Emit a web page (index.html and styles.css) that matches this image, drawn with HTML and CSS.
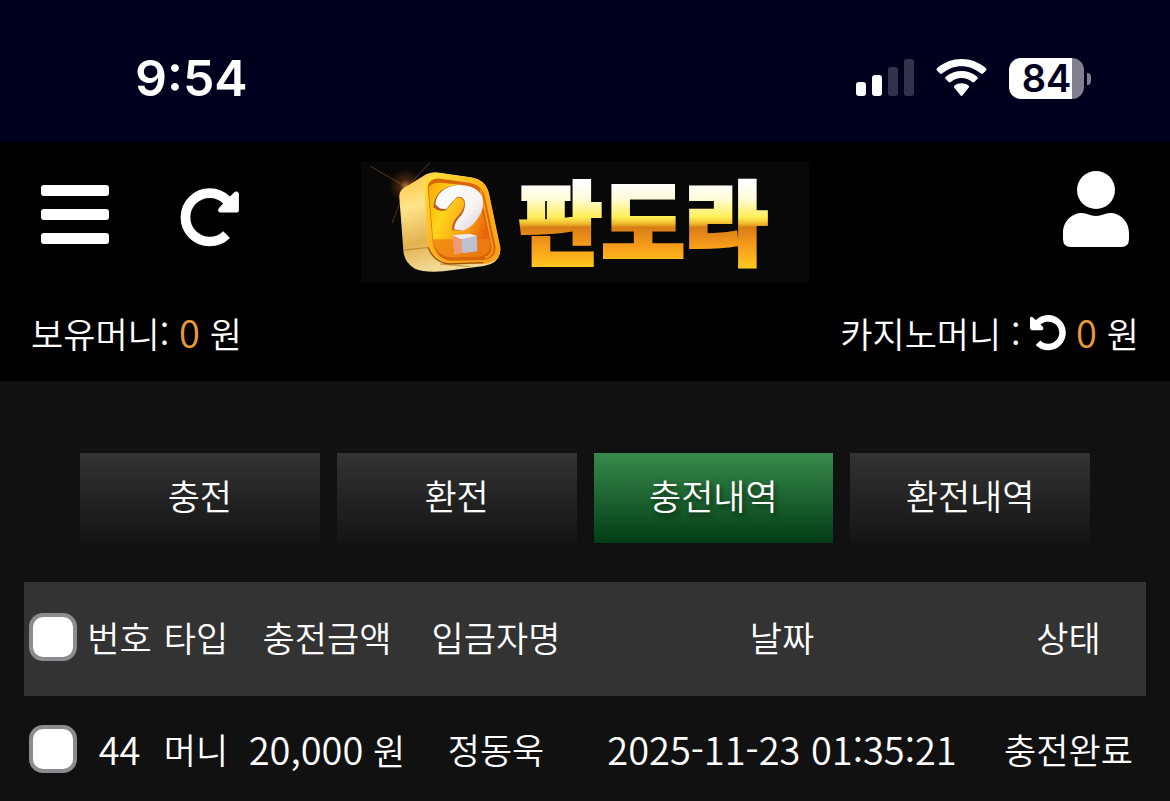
FILE: index.html
```html
<!DOCTYPE html>
<html lang="ko">
<head>
<meta charset="utf-8">
<meta name="viewport" content="width=device-width, initial-scale=1">
<title>충전내역</title>
<link rel="stylesheet" href="styles.css">
</head>
<body>
<div class="status">
  <time class="clock">9:54</time>
  <div class="indicators">
    <svg class="signal" width="58" height="38" viewBox="0 0 58 38" aria-hidden="true">
      <rect x="0" y="23" width="10" height="14" rx="3" fill="#fff"/>
      <rect x="16" y="16" width="10" height="21" rx="3" fill="#fff"/>
      <rect x="32" y="8" width="10" height="29" rx="3" fill="#34324b"/>
      <rect x="48" y="0" width="10" height="37" rx="3" fill="#34324b"/>
    </svg>
    <svg class="wifi" width="51" height="38" viewBox="0 0 51 38" aria-hidden="true" fill="#fff">
      <path d="M1 11.5Q-.2 10.400 1 9.300C15-3.100 36-3.100 50 9.300Q51.200 10.400 50 11.500L47 14.500Q46 15.400 45 14.600C33.500 4.700 17.500 4.700 6 14.600Q5 15.400 4 14.500Z"/>
      <path d="M9.500 19.700Q8.600 18.700 9.700 17.700C18.500 10 32.500 10 41.300 17.700Q42.400 18.700 41.500 19.700L38.300 23Q37.300 23.900 36.200 23C30 17.600 21 17.600 14.800 23Q13.700 23.900 12.700 23Z"/>
      <path d="M18.200 28.500Q17.300 27.500 18.500 26.600C22.500 23.500 28.500 23.500 32.500 26.600Q33.700 27.500 32.800 28.500L26.600 36.300Q25.500 37.500 24.400 36.300Z"/>
    </svg>
    <span class="battery"><span class="level">84</span></span>
  </div>
</div>

<header class="header">
  <div class="bar">
    <div class="tools">
      <button class="icon menu" type="button" aria-label="메뉴">
        <svg width="68" height="60" viewBox="0 0 68 60" fill="#fff">
          <rect width="68" height="11" rx="3"/><rect y="24" width="68" height="11" rx="3"/><rect y="48" width="68" height="11" rx="3"/>
        </svg>
      </button>
      <button class="icon reload" type="button" aria-label="새로고침">
        <svg width="59" height="60" viewBox="0 0 59 60">
          <path d="M45.800 12.200A24.200 24.200 0 1 0 45.600 46.600" fill="none" stroke="#fff" stroke-width="9.700"/>
          <path d="M42.500 15L49 8.500 53 4.500Q54.500 3.300 56 3.500 57.900 4 57.900 6V22.500Q57.900 24.500 56 24.500H39.500Q37.500 24.500 37 22.500 37 21 38 20Z" fill="#fff"/>
        </svg>
      </button>
    </div>
    <a class="logo" href="#" aria-label="판도라">
      <svg width="448" height="120" viewBox="0 0 448 120">
        <defs>
          <linearGradient id="gold" gradientUnits="userSpaceOnUse" x1="0" y1="20" x2="0" y2="104">
            <stop offset="0" stop-color="#fff"/><stop offset=".2" stop-color="#fffbd8"/><stop offset=".42" stop-color="#ffee55"/><stop offset=".5" stop-color="#eeb72a"/><stop offset=".54" stop-color="#d87d16"/><stop offset=".75" stop-color="#f59a1a"/><stop offset="1" stop-color="#ffc51e"/>
          </linearGradient>
          <linearGradient id="side" x1="0" y1="0" x2=".3" y2="1">
            <stop offset="0" stop-color="#ffc43a"/><stop offset=".35" stop-color="#ffe38a"/><stop offset=".7" stop-color="#e2b350"/><stop offset="1" stop-color="#f3dc9a"/>
          </linearGradient>
          <linearGradient id="rim" x1="0" y1="0" x2="1" y2="1">
            <stop offset="0" stop-color="#ffe43a"/><stop offset=".45" stop-color="#ffb21c"/><stop offset="1" stop-color="#f5a01c"/>
          </linearGradient>
          <linearGradient id="face" x1="0" y1="0" x2="1" y2=".5">
            <stop offset="0" stop-color="#f9a800"/><stop offset=".35" stop-color="#ffd51c"/><stop offset=".75" stop-color="#f99a12"/><stop offset="1" stop-color="#e9650c"/>
          </linearGradient>
          <linearGradient id="mark" x1="0" y1="0" x2="1" y2="1">
            <stop offset="0" stop-color="#fff"/><stop offset=".65" stop-color="#f6f2f2"/><stop offset="1" stop-color="#cfcbd2"/>
          </linearGradient>
          <radialGradient id="flare"><stop offset="0" stop-color="#ffb060" stop-opacity=".7"/><stop offset=".4" stop-color="#a04c14" stop-opacity=".4"/><stop offset="1" stop-color="#a04c14" stop-opacity="0"/></radialGradient>
        </defs>
        <g transform="scale(.3333) translate(-3 -6)">
          <circle cx="138" cy="78" r="50" fill="url(#flare)"/>
          <path d="M30 18L140 82M210 8L136 86 96 190" stroke="#b56a35" stroke-width="3" opacity=".45" fill="none"/>
          <path d="M118 112Q116 88 142 78L190 48Q210 34 240 38L330 52Q378 58 386 100L420 262Q426 308 372 318L250 334Q190 338 165 326 132 308 130 270Z" fill="url(#side)"/>
          <path d="M192 78Q196 42 240 40L330 52Q378 60 388 104L421 262Q425 306 372 312L266 313Q218 308 204 258Z" fill="url(#rim)"/>
          <path d="M203 84Q205 54 242 56L326 68Q366 74 375 112L406 256Q412 296 368 301L270 302Q232 298 219 252Z" fill="#d96508"/>
          <path d="M206 86Q208 68 242 68L316 76Q348 82 356 116L390 246Q394 286 356 290L272 292Q232 286 220 248Z" fill="url(#face)"/>
          <path d="M218 238L388 238Q396 286 356 290L272 292Q232 286 220 248Z" fill="#ed8011" opacity=".8"/>
          <path d="M362 90L397 256Q402 284 376 293" fill="none" stroke="#ff9a28" stroke-width="5"/>
          <path d="M204 262Q222 308 268 312L370 308" fill="none" stroke="#9c5210" stroke-width="4"/>
          <path d="M134 270L206 262M240 312L330 320" stroke="#b77922" stroke-width="4" opacity=".6"/>
          <path d="M220 142Q224 84 288 75 350 72 366 112 376 152 344 184 322 204 306 212L276 210Q276 184 296 166 316 144 312 126 304 104 286 118 274 134 258 150Q238 158 220 142Z" fill="#bd5c24"/>
          <path d="M226 132Q232 84 292 75 348 74 366 108 378 146 350 180 328 208 308 212L282 208Q284 184 304 166 318 146 314 122 304 104 288 114 276 126 260 146 240 152 226 132Z" fill="url(#mark)"/>
          <path d="M278 226L304 224 310 278 282 284Z" fill="#ee9b75"/>
          <path d="M304 228L350 226 352 274 308 280Z" fill="#bfc0cf"/>
          <path d="M278 226L328 221 350 227 304 238Z" fill="#eeeaf0"/>
        </g>
        <text class="wordmark" x="158" y="95" fill="url(#gold)" stroke="url(#gold)">판도라</text>
      </svg>
    </a>
    <button class="icon user" type="button" aria-label="내 정보">
      <svg width="66" height="76" viewBox="0 0 66 76" fill="#fff">
        <circle cx="33" cy="19" r="19"/>
        <path d="M0 62C0 50 9 42 19 42C24 42 27 45 33 45C39 45 42 42 47 42C57 42 66 50 66 62V68Q66 76 58 76H8Q0 76 0 68Z"/>
      </svg>
    </button>
  </div>
  <div class="money">
    <p>보유머니: <span class="amount">0</span> 원</p>
    <p>카지노머니 :
      <button class="icon refresh" type="button" aria-label="카지노머니 새로고침">
        <svg width="36" height="36" viewBox="0 0 36 36">
          <path d="M6.500 9.500A14.300 14.300 0 1 1 8 27.700" fill="none" stroke="#fff" stroke-width="6.500"/>
          <path d="M0 3Q1 1 3 2.500L13 12Q14 15 11.500 15.300H2Q0 15 0 13Z" fill="#fff"/>
        </svg>
      </button>
      <span class="amount">0</span> 원</p>
  </div>
</header>

<main class="content">
  <nav class="tabs">
    <a class="tab" href="#">충전</a>
    <a class="tab" href="#">환전</a>
    <a class="tab active" href="#" aria-current="page">충전내역</a>
    <a class="tab" href="#">환전내역</a>
  </nav>
  <table class="history">
    <colgroup><col class="c-check"><col class="c-no"><col class="c-type"><col class="c-sum"><col class="c-name"><col><col class="c-state"></colgroup>
    <thead>
      <tr><th><input class="check" type="checkbox" aria-label="전체 선택"></th><th>번호</th><th>타입</th><th>충전금액</th><th>입금자명</th><th>날짜</th><th>상태</th></tr>
    </thead>
    <tbody>
      <tr><td><input class="check" type="checkbox" aria-label="44번 선택"></td><td><span class="num">44</span></td><td>머니</td><td><span class="num">20,000</span> 원</td><td>정동욱</td><td><span class="num">2025-11-23 01:35:21</span></td><td>충전완료</td></tr>
    </tbody>
  </table>
</main>
</body>
</html>
```
FILE: styles.css
```css
* { box-sizing: border-box; }
body {
  margin: 0;
  min-height: 100vh;
  overflow-x: hidden;
  background: #111;
  color: #fff;
  font: 350 35px/48px "Noto Sans CJK KR", sans-serif;
}
p { margin: 0; }
a { color: inherit; text-decoration: none; }
svg { display: block; overflow: visible; }

.status {
  display: flex;
  justify-content: space-between;
  align-items: center;
  height: 142px;
  padding: 14px 79px 0 135px;
  background: #00001e;
}
.clock { font: 600 50px/56px Inter, sans-serif; }
.indicators { display: flex; align-items: center; gap: 22px; }
.battery {
  position: relative;
  width: 75px;
  height: 41px;
  margin-right: 7px;
  border-radius: 12px;
  background: linear-gradient(90deg, #fff 63px, #82808f 63px);
}
.battery::after {
  content: "";
  position: absolute;
  right: -7px;
  top: 15px;
  width: 4px;
  height: 12px;
  border-radius: 0 6px 6px 0;
  background: #82808f;
}
.level {
  display: block;
  text-align: center;
  color: #00001e;
  font: 600 38px/41px Inter, sans-serif;
}

.header { padding: 20px 31px 24px; background: #000; }
.bar {
  display: grid;
  grid-template-columns: 1fr auto 1fr;
  align-items: start;
  padding: 0 10px;
}
.icon { padding: 0; border: 0; background: none; cursor: pointer; }
.tools { display: flex; gap: 72px; }
.menu { margin-top: 20px; }
.reload { margin-top: 26px; }
.user { justify-self: end; margin-top: 9px; }
.logo { background: #080808; }
.wordmark {
  font: 900 90px "Noto Sans CJK KR", sans-serif;
  stroke-width: 4px;
}
.money { display: flex; justify-content: space-between; padding-top: 26px; }
.amount { color: #e99a3a; font-size: 38px; }
.refresh { vertical-align: -3px; }

.content { padding: 72px 24px 0; }
.tabs {
  display: grid;
  grid-template-columns: repeat(4, 1fr);
  gap: 17px;
  padding: 0 56px;
  margin-bottom: 39px;
}
.tab {
  padding: 18px 0 24px;
  text-align: center;
  background: linear-gradient(#333, #141414);
}
.active {
  background: linear-gradient(#388a4b, #023d16);
  text-shadow: 2px 3px 5px rgba(0, 0, 0, .5);
}

.history { width: 100%; border-collapse: collapse; table-layout: fixed; }
.history th, .history td {
  padding: 0;
  font-weight: 350;
  text-align: center;
  white-space: nowrap;
}
.history th { height: 114px; padding-bottom: 4px; background: #333; }
.history td { height: 108px; padding-bottom: 2px; }
.c-check { width: 58px; }
.c-no { width: 75px; }
.c-type { width: 78px; }
.c-sum { width: 184px; }
.c-name { width: 154px; }
.c-state { width: 155px; }
.num { font-size: 38px; }
.check {
  appearance: none;
  display: block;
  width: 48px;
  height: 48px;
  margin: 0 auto;
  border: 4px solid #8c8b90;
  border-radius: 14px;
  background: #fff;
}
.check:checked { background: #388a4b; }
```
